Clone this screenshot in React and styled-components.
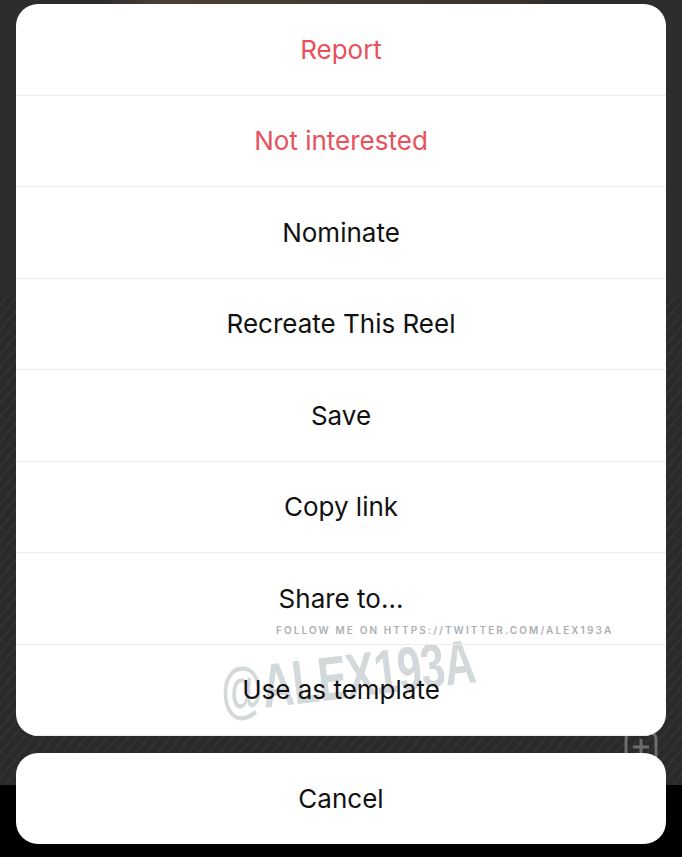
import React from 'react';
import styled, { createGlobalStyle } from 'styled-components';

const GlobalStyle = createGlobalStyle`
  html, body {
    margin: 0;
    padding: 0;
    background: #000;
  }
  * {
    box-sizing: border-box;
  }
`;

const items = [
  { label: 'Report', danger: true },
  { label: 'Not interested', danger: true },
  { label: 'Nominate' },
  { label: 'Recreate This Reel' },
  { label: 'Save' },
  { label: 'Copy link' },
  { label: 'Share to...' },
  { label: 'Use as template' },
];

function App() {
  return (
    <>
      <GlobalStyle />
      <Screen>
        <PlusIcon viewBox='0 0 40 40' fill='none'>
          <rect x='4' y='4' width='30' height='30' rx='7' stroke='#6d6d6d' strokeWidth='3' />
          <path d='M19 11v16M11 19h16' stroke='#6d6d6d' strokeWidth='3' />
        </PlusIcon>
        <Sheet>
          <Card>
            {items.map((item) => (
              <Row key={item.label} $danger={item.danger}>
                {item.label}
              </Row>
            ))}
            <Credit>FOLLOW ME ON HTTPS://TWITTER.COM/ALEX193A</Credit>
            <Watermark>@ALEX193A</Watermark>
          </Card>
          <CancelCard>Cancel</CancelCard>
        </Sheet>
      </Screen>
    </>
  );
}

export default App;

const Screen = styled.div`
  position: relative;
  width: 682px;
  height: 857px;
  overflow: hidden;
  background:
    linear-gradient(to bottom, transparent 0, transparent 785px, #000 785px),
    repeating-linear-gradient(
      -50deg,
      #2a2a2c 0,
      #2a2a2c 6px,
      #323234 6px,
      #323234 8px
    ) 0 297px / 100% 488px no-repeat,
    linear-gradient(to right, #2c2c2e 0, #2c2c2e 100px, #4a4038 160px, #3a332c 520px, #2c2c2e 560px) 0 0 / 100% 6px no-repeat,
    #2d2d2f;
  font-family: Inter, 'Noto Sans', sans-serif;
`;

const PlusIcon = styled.svg`
  position: absolute;
  left: 622px;
  top: 728px;
  width: 40px;
  height: 40px;
`;

const Sheet = styled.div`
  position: relative;
  display: flex;
  flex-direction: column;
  gap: 17px;
  padding: 4px 16px 0;
`;

const Card = styled.div`
  position: relative;
  display: flex;
  flex-direction: column;
  background: #fff;
  border-radius: 22px;
  overflow: hidden;
`;

const Row = styled.div`
  height: 91.5px;
  display: flex;
  align-items: center;
  justify-content: center;
  font-size: 26px;
  color: ${(p) => (p.$danger ? '#e8505b' : '#111')};
  border-bottom: 1px solid #ececec;
  position: relative;
  z-index: 1;

  &:last-of-type {
    border-bottom: none;
  }
`;

const Credit = styled.div`
  position: absolute;
  left: 260px;
  top: 620px;
  font-size: 10px;
  font-weight: 600;
  letter-spacing: 2.1px;
  color: #a9b0b4;
  white-space: nowrap;
  z-index: 2;
`;

const Watermark = styled.div`
  position: absolute;
  left: 209px;
  top: 652px;
  font-family: 'Liberation Sans', Arial, sans-serif;
  font-size: 62px;
  font-weight: 700;
  letter-spacing: -1px;
  color: #d3d8db;
  transform: rotate(-7deg) scaleX(0.7);
  transform-origin: left bottom;
  white-space: nowrap;
  z-index: 0;
`;

const CancelCard = styled.div`
  height: 91px;
  display: flex;
  align-items: center;
  justify-content: center;
  background: #fff;
  border-radius: 22px;
  font-size: 26px;
  color: #111;
`;
